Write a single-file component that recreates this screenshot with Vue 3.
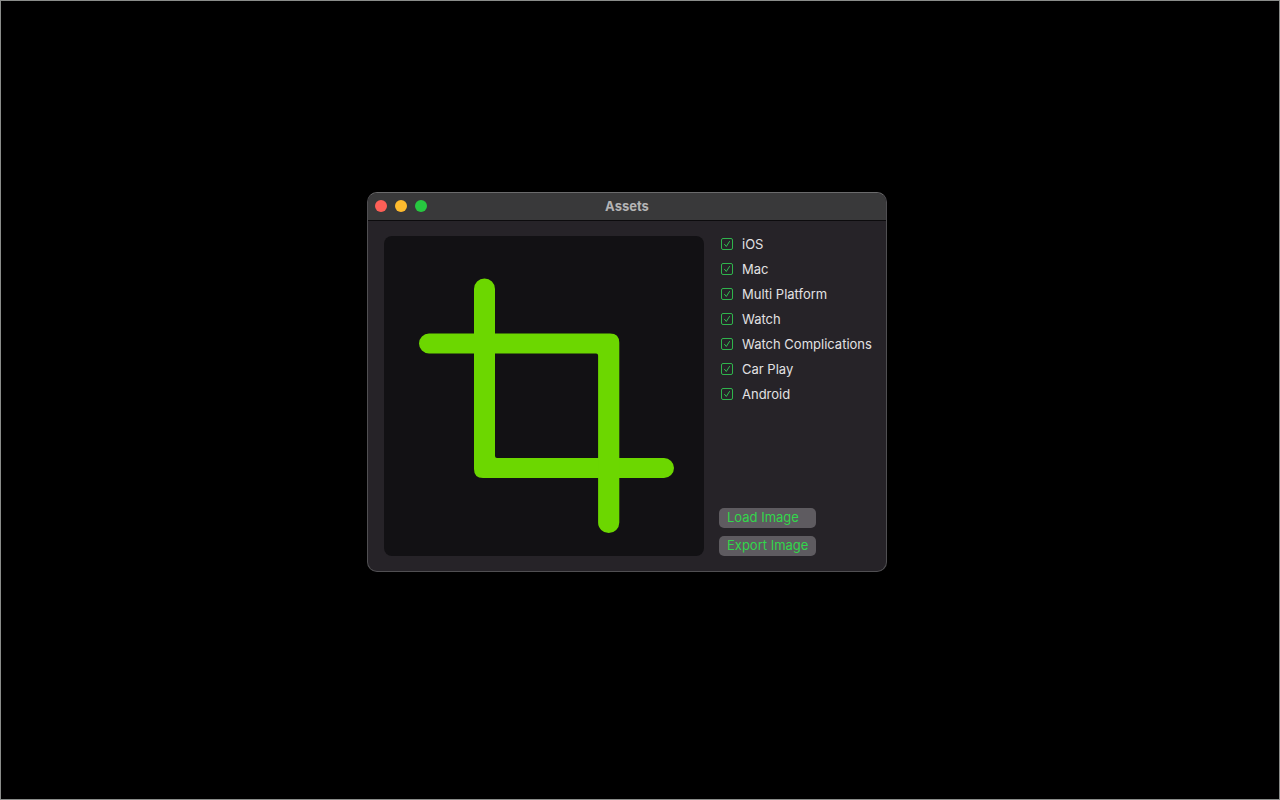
<script setup>
import { ref } from 'vue'

const platforms = ref([
  { id: 'ios', label: 'iOS', checked: true },
  { id: 'mac', label: 'Mac', checked: true },
  { id: 'multi-platform', label: 'Multi Platform', checked: true },
  { id: 'watch', label: 'Watch', checked: true },
  { id: 'watch-complications', label: 'Watch Complications', checked: true },
  { id: 'car-play', label: 'Car Play', checked: true },
  { id: 'android', label: 'Android', checked: true }
])
</script>

<template>
  <div class="desktop">
    <main class="window">
      <header class="titlebar">
        <div class="controls">
          <button type="button" class="dot close" aria-label="Close"></button>
          <button type="button" class="dot minimize" aria-label="Minimize"></button>
          <button type="button" class="dot maximize" aria-label="Zoom"></button>
        </div>
        <h1 class="title">Assets</h1>
      </header>

      <div class="content">
        <div class="preview">
          <svg class="preview-image" viewBox="0 0 320 320" fill="#6cd700" aria-hidden="true">
            <path d="M90 53a10.5 10.5 0 0 1 21 0V220q0 2 2 2H280a10 10 0 0 1 0 20H99q-9 0-9-9Z" />
            <path d="M45 97.5H226q9.300 0 9.300 9.300V286.500a10.600 10.600 0 0 1-21.200 0V119.500q0-2-2-2H45a10 10 0 0 1 0-20Z" />
          </svg>
        </div>

        <div class="sidebar">
          <div class="options">
            <label v-for="platform in platforms" :key="platform.id" class="option">
              <span class="box">
                <input v-model="platform.checked" type="checkbox" class="checkbox" />
                <svg v-if="platform.checked" class="tick" viewBox="0 0 12 12" aria-hidden="true">
                  <path d="M3.500 6.300 5.300 8.500 8.500 3.500" />
                </svg>
              </span>
              {{ platform.label }}
            </label>
          </div>

          <div class="actions">
            <button type="button" class="action load">Load Image</button>
            <button type="button" class="action">Export Image</button>
          </div>
        </div>
      </div>
    </main>
  </div>
</template>

<style>
body {
  margin: 0;
  background-color: #000;
}
</style>

<style scoped>
.desktop {
  position: relative;
  box-sizing: border-box;
  min-height: 100vh;
  border: 1px solid #8a8c8a;
  background-color: #000;
  font-family: Inter, "Liberation Sans", sans-serif;
  font-size: 13px;
  line-height: 17px;
}

.window {
  position: absolute;
  top: 191px;
  left: 366px;
  box-sizing: border-box;
  width: 520px;
  border: 1px solid #504f52;
  border-top-color: #6b6b6c;
  border-radius: 10px;
  background-color: #262328;
  overflow: hidden;
}

.titlebar {
  display: grid;
  grid-template-columns: 1fr auto 1fr;
  align-items: center;
  height: 26px;
  padding-bottom: 1px;
  border-bottom: 1px solid #0c0b0d;
  background-color: #39393a;
}

.controls {
  display: flex;
  gap: 8px;
  padding-left: 7px;
}

.dot {
  width: 12px;
  height: 12px;
  padding: 0;
  border: none;
  border-radius: 50%;
}

.close {
  background-color: #fe5f57;
}

.minimize {
  background-color: #febb2e;
}

.maximize {
  background-color: #27c840;
}

.title {
  margin: 0;
  color: #b4b4b5;
  font-size: 13px;
  font-weight: 700;
}

.content {
  display: flex;
  gap: 15px;
  padding: 15px 16px;
}

.preview {
  flex: 0 0 320px;
  border-radius: 8px;
  background-color: #121114;
}

.preview-image {
  display: block;
  width: 100%;
}

.sidebar {
  display: flex;
  flex: 1;
  flex-direction: column;
  justify-content: space-between;
}

.options {
  display: flex;
  flex-direction: column;
  gap: 8px;
}

.option {
  display: flex;
  align-items: center;
  gap: 9px;
  color: #e2e1e3;
  white-space: nowrap;
}

.box {
  display: grid;
  width: 12px;
  height: 12px;
  margin: 0 0 1px 2px;
}

.checkbox {
  grid-area: 1 / 1;
  box-sizing: border-box;
  width: 12px;
  height: 12px;
  margin: 0;
  appearance: none;
  border: 1px solid #2fb44c;
  border-radius: 2px;
}

.tick {
  grid-area: 1 / 1;
  width: 12px;
  height: 12px;
  fill: none;
  stroke: #30c050;
  stroke-width: 1;
  stroke-linecap: round;
  stroke-linejoin: round;
  pointer-events: none;
}

.actions {
  display: flex;
  flex-direction: column;
  align-items: flex-start;
  gap: 8px;
}

.action {
  height: 20px;
  padding: 0 8px 2px;
  border: none;
  border-radius: 5px;
  background-color: #5e5b60;
  color: #32d74b;
  font-family: inherit;
  font-size: 13px;
  line-height: 18px;
  text-align: left;
}

.load {
  min-width: 97px;
}
</style>
